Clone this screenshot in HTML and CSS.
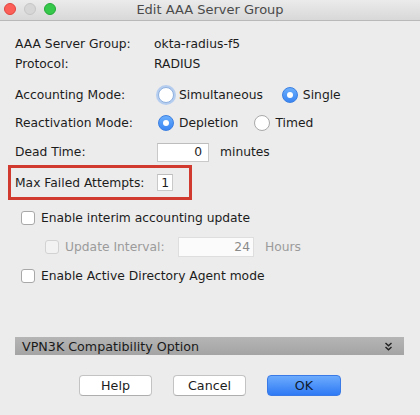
FILE: index.html
```html
<!DOCTYPE html>
<html>
<head>
<meta charset="utf-8">
<link rel="stylesheet" href="styles.css">
</head>
<body>
<div class="window">
  <div class="titlebar">
    <div class="lights">
      <span class="light red"></span>
      <span class="light gray"></span>
      <span class="light green"></span>
    </div>
    <div class="title">Edit AAA Server Group</div>
    <div></div>
  </div>
  <div class="content">
    <div class="row info first"><span class="label">AAA Server Group:</span><span>okta-radius-f5</span></div>
    <div class="row info"><span class="label">Protocol:</span><span>RADIUS</span></div>
    <div class="row radio-row acct">
      <span class="label">Accounting Mode:</span>
      <span class="radio focus"></span><span class="opt">Simultaneous</span>
      <span class="radio on"></span><span class="opt">Single</span>
    </div>
    <div class="row radio-row react">
      <span class="label">Reactivation Mode:</span>
      <span class="radio on"></span><span class="opt opt-dep">Depletion</span>
      <span class="radio"></span><span class="opt">Timed</span>
    </div>
    <div class="row dead">
      <span class="label">Dead Time:</span>
      <span class="field dead-field">0</span>
      <span class="unit">minutes</span>
    </div>
    <div class="highlight">
      <span class="label">Max Failed Attempts:</span>
      <span class="field small-field">1</span>
    </div>
    <div class="row check-row cb1">
      <span class="check"></span><span>Enable interim accounting update</span>
    </div>
    <div class="row check-row cb2 disabled">
      <span class="check dis"></span><span class="sub-label">Update Interval:</span>
      <span class="field interval-field">24</span>
      <span class="unit">Hours</span>
    </div>
    <div class="row check-row cb3">
      <span class="check"></span><span>Enable Active Directory Agent mode</span>
    </div>
    <div class="section-bar">
      <span>VPN3K Compatibility Option</span>
      <svg class="chev" width="9" height="9" viewBox="0 0 9 9">
        <polyline points="1.5,1 4.5,3.8 7.5,1" fill="none" stroke="#222" stroke-width="1.4"/>
        <polyline points="1.5,5 4.5,7.8 7.5,5" fill="none" stroke="#222" stroke-width="1.4"/>
      </svg>
    </div>
    <div class="buttons">
      <span class="btn">Help</span>
      <span class="btn">Cancel</span>
      <span class="btn primary">OK</span>
    </div>
  </div>
</div>
</body>
</html>
```
FILE: styles.css
```css
html, body {
  margin: 0;
  padding: 0;
  background: #ececec;
}
body {
  font-family: "DejaVu Sans", "Liberation Sans", sans-serif;
  font-size: 12.3px;
  color: #1c1c1c;
}
.window {
  width: 420px;
  height: 415px;
  background: #ececec;
  overflow: hidden;
}
.titlebar {
  height: 20px;
  border-bottom: 1px solid #b9b9b9;
  background: linear-gradient(#ebebeb, #d8d8d8);
  display: grid;
  grid-template-columns: 1fr auto 1fr;
  align-items: center;
}
.lights {
  display: flex;
  gap: 8px;
  padding-left: 4px;
  padding-bottom: 2px;
}
.light {
  width: 12px;
  height: 12px;
  border-radius: 50%;
  box-sizing: border-box;
}
.red { background: #fc5f57; border: 1px solid #e0443e; }
.gray { background: #d6d6d6; border: 1px solid #c6c6c6; }
.green { background: #35c84a; border: 1px solid #24a938; }
.title {
  font-size: 13px;
  color: #4a4a4a;
  padding-bottom: 1px;
}
.content {
  padding: 0 16px 0 15px;
}
.row {
  display: flex;
  align-items: center;
}
.label {
  width: 139px;
  flex: none;
}
.info { height: 20px; }
.info.first { margin-top: 13px; }
.radio-row { height: 26px; }
.acct { margin-top: 8px; }
.react { margin-top: 2px; }
.radio {
  width: 16px;
  height: 16px;
  box-sizing: border-box;
  border-radius: 50%;
  border: 1px solid #a9a9a9;
  background: #fff;
  margin-left: 4px;
  display: flex;
  align-items: center;
  justify-content: center;
  flex: none;
}
.radio.focus {
  box-shadow: 0 0 0 2px #b5cdef;
  border-color: #8fb0de;
}
.radio.on {
  background: linear-gradient(#6aaefc, #3a86f3);
  border-color: #3b7fe2;
}
.radio.on::after {
  content: "";
  width: 6px;
  height: 6px;
  border-radius: 50%;
  background: #fff;
}
.opt {
  margin-left: 5px;
  margin-right: 15px;
}
.opt-dep { margin-right: 12px; }
.dead {
  height: 26px;
  margin-top: 3px;
}
.field {
  background: #fff;
  border: 1px solid #c9c9c9;
  border-top-color: #bdbdbd;
  box-sizing: border-box;
  text-align: right;
  padding-right: 4px;
  line-height: 16px;
  flex: none;
}
.dead-field {
  width: 52px;
  height: 19px;
  margin-left: 3px;
  padding-right: 6px;
}
.unit { margin-left: 11px; }
.highlight {
  width: 184px;
  height: 35px;
  box-sizing: border-box;
  border: 3px solid #d13a2f;
  margin-left: -7px;
  padding-left: 4px;
  display: flex;
  align-items: center;
}
.small-field {
  width: 16px;
  height: 17px;
  margin-left: 3px;
  padding-right: 3px;
}
.check-row { height: 20px; }
.cb1 { margin-top: 8px; }
.cb2 { margin-top: 7px; height: 24px; }
.cb3 { margin-top: 7px; }
.check {
  width: 14px;
  height: 14px;
  box-sizing: border-box;
  border: 1px solid #a8a8a8;
  border-radius: 3px;
  background: #fff;
  margin-left: 6px;
  margin-right: 6px;
  flex: none;
}
.check.dis {
  margin-left: 30px;
  border-color: #d2d2d2;
  background: #f2f2f2;
}
.disabled { color: #9b9b9b; }
.sub-label { width: 113px; flex: none; }
.interval-field {
  width: 76px;
  height: 20px;
  line-height: 18px;
  border-color: #dedede;
  background: #fbfbfb;
  color: #8a8a8a;
  padding-right: 3px;
}
.section-bar {
  margin-top: 51px;
  height: 18px;
  background: linear-gradient(#b5b5b5, #a4a4a4);
  display: flex;
  align-items: center;
  justify-content: space-between;
  padding: 0 11px 0 7px;
  font-size: 12.7px;
  color: #1a1a1a;
}
.chev { display: block; }
.buttons {
  margin-top: 20px;
  margin-left: -15px;
  margin-right: -16px;
  display: flex;
  justify-content: center;
  gap: 21px;
}
.btn {
  width: 73px;
  height: 21px;
  box-sizing: border-box;
  background: #fff;
  border: 1px solid #c3c3c3;
  border-bottom-color: #aeaeae;
  border-radius: 4px;
  display: flex;
  align-items: center;
  justify-content: center;
  font-size: 12.7px;
  color: #1c1c1c;
}
.btn.primary {
  width: 74px;
  background: linear-gradient(#6cabfc, #2f7af5);
  border-color: #3a7ae6;
  color: #0e1a30;
}
```
